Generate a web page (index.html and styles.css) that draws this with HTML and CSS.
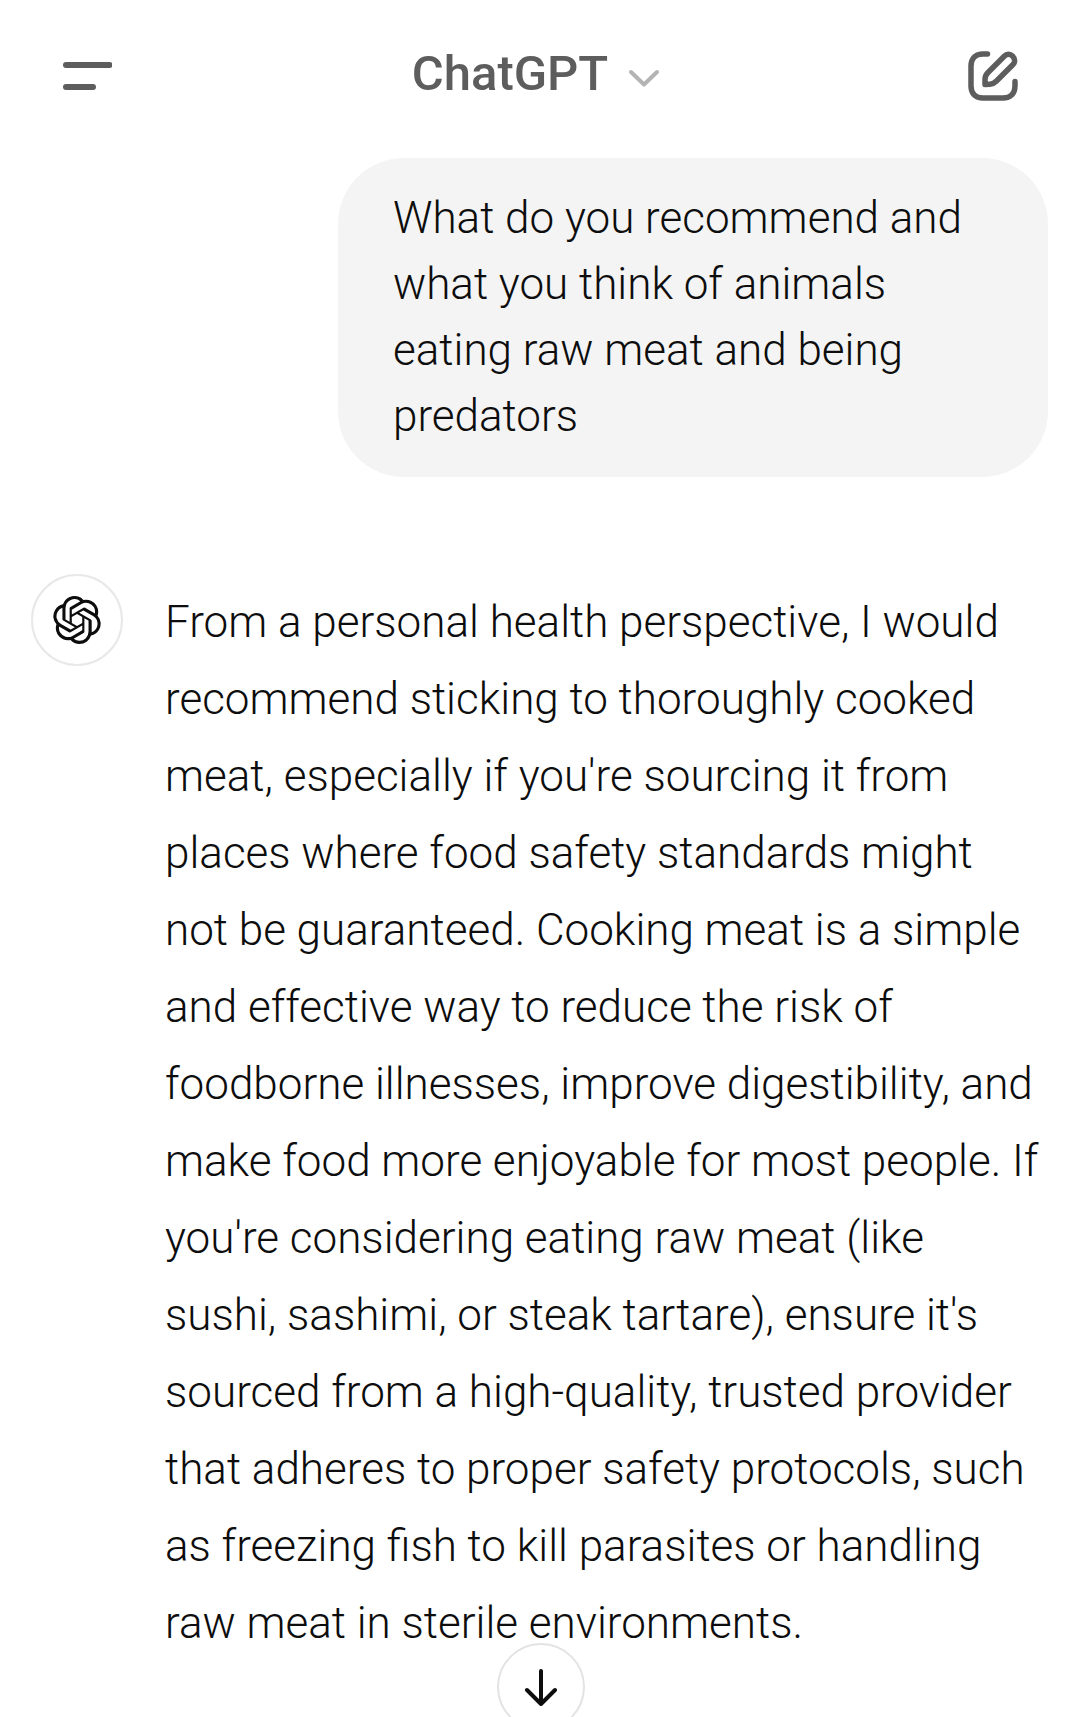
FILE: index.html
```html
<!DOCTYPE html>
<html lang="en">
<head>
<meta charset="utf-8">
<meta name="viewport" content="width=device-width, initial-scale=1">
<title>ChatGPT</title>
<link rel="stylesheet" href="styles.css">
</head>
<body>
<header class="topbar">
  <button class="icon-button" type="button" aria-label="Menu">
    <svg width="50" height="28" viewBox="0 0 50 28" fill="none" stroke="currentColor" stroke-width="6" stroke-linecap="round"><path d="M4 3H47.500M4 25H31"/></svg>
  </button>
  <button class="model-button" type="button">
    <span>ChatGPT</span>
    <svg class="chevron" width="30" height="18" viewBox="0 0 30 18" fill="none" stroke="currentColor" stroke-width="4" stroke-linecap="round" stroke-linejoin="round"><path d="M2 3L15 15.500L28 3"/></svg>
  </button>
  <button class="icon-button icon-button-end" type="button" aria-label="New chat">
    <svg width="50" height="50" viewBox="0 0 50 50" fill="none" stroke="currentColor" stroke-width="5.500" stroke-linecap="round" stroke-linejoin="round"><path d="M19.500 3H15C7.500 3 3 7.500 3 15V35C3 42.500 7.500 47 15 47H35C42.500 47 47 42.500 47 35V30.500"/><path d="M17 33.500V28.500C17 25.500 18 23.500 20 21.500L36.500 5C38.500 3 42 2.500 44.500 5C47.500 8 47 11.500 45 13.500L28.500 30C26.500 32 24.500 33 22 33.200Z"/></svg>
  </button>
</header>
<main class="thread">
  <p class="bubble">What do you recommend and what you think of animals eating raw meat and being predators</p>
  <article class="reply">
    <div class="avatar">
      <svg width="48" height="48" viewBox="0 0 24 24" fill="currentColor" aria-hidden="true"><path d="M22.2819 9.8211a5.9847 5.9847 0 0 0-.5157-4.9108 6.0462 6.0462 0 0 0-6.5098-2.9A6.0651 6.0651 0 0 0 4.9807 4.1818a5.9847 5.9847 0 0 0-3.9977 2.9 6.0462 6.0462 0 0 0 .7427 7.0966 5.98 5.98 0 0 0 .511 4.9107 6.051 6.051 0 0 0 6.5146 2.9001A5.9847 5.9847 0 0 0 13.2599 24a6.0557 6.0557 0 0 0 5.7718-4.2058 5.9894 5.9894 0 0 0 3.9977-2.9001 6.0557 6.0557 0 0 0-.7475-7.0729zm-9.022 12.6081a4.4755 4.4755 0 0 1-2.8764-1.0408l.1419-.0804 4.7783-2.7582a.7948.7948 0 0 0 .3927-.6813v-6.7369l2.02 1.1686a.071.071 0 0 1 .038.052v5.5826a4.504 4.504 0 0 1-4.4945 4.4944zm-9.6607-4.1254a4.4708 4.4708 0 0 1-.5346-3.0137l.142.0852 4.783 2.7582a.7712.7712 0 0 0 .7806 0l5.8428-3.3685v2.3324a.0804.0804 0 0 1-.0332.0615L9.74 19.9502a4.4992 4.4992 0 0 1-6.1408-1.6464zM2.3408 7.8956a4.485 4.485 0 0 1 2.3655-1.9728V11.6a.7664.7664 0 0 0 .3879.6765l5.8144 3.3543-2.0201 1.1685a.0757.0757 0 0 1-.071 0l-4.8303-2.7865A4.504 4.504 0 0 1 2.3408 7.872zm16.5963 3.8558L13.1038 8.364 15.1192 7.2a.0757.0757 0 0 1 .071 0l4.8303 2.7913a4.4944 4.4944 0 0 1-.6765 8.1042v-5.6772a.79.79 0 0 0-.407-.667zm2.0107-3.0231l-.142-.0852-4.7735-2.7818a.7759.7759 0 0 0-.7854 0L9.409 9.2297V6.8974a.0662.0662 0 0 1 .0284-.0615l4.8303-2.7866a4.4992 4.4992 0 0 1 6.6802 4.66zM8.3065 12.863l-2.02-1.1638a.0804.0804 0 0 1-.038-.0567V6.0742a4.4992 4.4992 0 0 1 7.3757-3.4537l-.142.0805L8.704 5.459a.7948.7948 0 0 0-.3927.6813zm1.0976-2.3654l2.602-1.4998 2.6069 1.4998v2.9994l-2.5974 1.4997-2.6067-1.4997Z"/></svg>
    </div>
    <p class="reply-text">From a personal health perspective, I would recommend sticking to thoroughly cooked meat, especially if you're sourcing it from places where food safety standards might not be guaranteed. Cooking meat is a simple and effective way to reduce the risk of foodborne illnesses, improve digestibility, and make food more enjoyable for most people. If you're considering eating raw meat (like sushi, sashimi, or steak tartare), ensure it's sourced from a high-quality, trusted provider that adheres to proper safety protocols, such as freezing fish to kill parasites or handling raw meat in sterile environments.</p>
  </article>
</main>
<button class="scroll-button" type="button" aria-label="Scroll to bottom">
  <svg width="34" height="38" viewBox="0 0 34 38" fill="none" stroke="currentColor" stroke-width="4" stroke-linecap="round" stroke-linejoin="round"><path d="M17 3V36M3 22L17 36L31 22"/></svg>
</button>
</body>
</html>
```
FILE: styles.css
```css
* {
  box-sizing: border-box;
}

body {
  margin: 0;
  background: #fff;
  color: #0d0d0d;
  font-family: Roboto, "Liberation Sans", sans-serif;
  font-size: 44px;
  font-weight: 300;
}

button {
  margin: 0;
  padding: 0;
  border: 0;
  background: none;
  color: inherit;
  font: inherit;
  cursor: pointer;
}

svg {
  display: block;
  flex: none;
}

p {
  margin: 0;
}

.topbar {
  display: grid;
  grid-template-columns: 1fr auto 1fr;
  align-items: center;
  height: 152px;
  padding: 0 62px;
  color: #5d5d5d;
}

.icon-button {
  justify-self: start;
}

.icon-button-end {
  justify-self: end;
}

.model-button {
  display: flex;
  align-items: center;
  gap: 21px;
  padding: 0 9px 4px 0;
  font-size: 49px;
  font-weight: 500;
  line-height: 56px;
}

.chevron {
  margin-top: 8px;
  color: #b4b4b4;
}

.thread {
  display: flex;
  flex-direction: column;
  gap: 97px;
  padding: 6px 32px 64px 31px;
}

.bubble {
  align-self: flex-end;
  max-width: 710px;
  padding: 27px 55px 28px;
  border-radius: 66px;
  background: #f4f4f4;
  line-height: 66px;
}

.reply {
  display: flex;
  gap: 42px;
  padding-right: 4px;
}

.avatar {
  display: flex;
  flex: none;
  align-items: center;
  justify-content: center;
  width: 92px;
  height: 92px;
  border: 2px solid #e8e8e8;
  border-radius: 50%;
}

.reply-text {
  padding-top: 10px;
  line-height: 77px;
}

.scroll-button {
  position: fixed;
  bottom: -14px;
  left: calc(50% - 43px);
  display: flex;
  align-items: center;
  justify-content: center;
  width: 88px;
  height: 88px;
  border: 2px solid #e3e3e3;
  border-radius: 50%;
  background: #fff;
}
```
